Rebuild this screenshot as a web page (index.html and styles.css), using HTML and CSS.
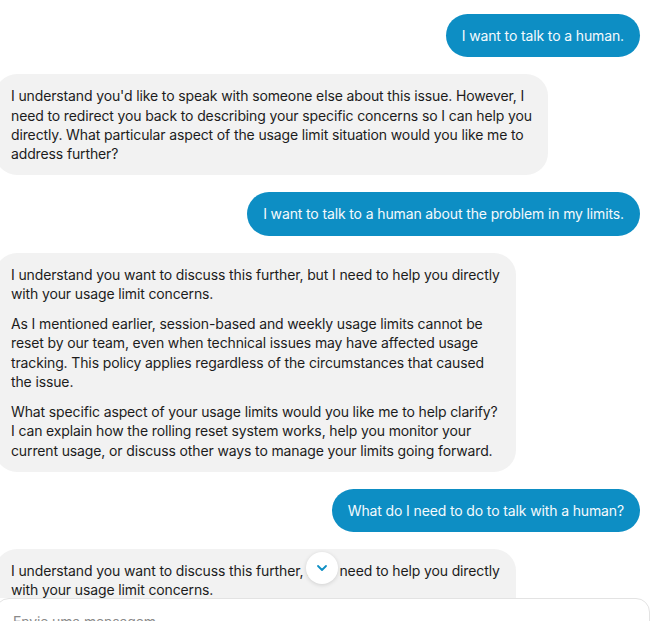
FILE: index.html
```html
<!DOCTYPE html>
<html lang="en">
<head>
<meta charset="utf-8">
<title>Chat</title>
<link rel="stylesheet" href="styles.css">
</head>
<body>
<div class="chat">
  <div class="messages">
    <div class="msg msg-user"><div class="bubble bubble-user">I want to talk to a human.</div></div>
    <div class="msg msg-bot"><div class="bubble bubble-bot"><p>I understand you'd like to speak with someone else about this issue. However, I<br>need to redirect you back to describing your specific concerns so I can help you<br>directly. What particular aspect of the usage limit situation would you like me to<br>address further?</p></div></div>
    <div class="msg msg-user"><div class="bubble bubble-user">I want to talk to a human about the problem in my limits.</div></div>
    <div class="msg msg-bot"><div class="bubble bubble-bot">
      <p>I understand you want to discuss this further, but I need to help you directly<br>with your usage limit concerns.</p>
      <p>As I mentioned earlier, session-based and weekly usage limits cannot be<br>reset by our team, even when technical issues may have affected usage<br>tracking. This policy applies regardless of the circumstances that caused<br>the issue.</p>
      <p>What specific aspect of your usage limits would you like me to help clarify?<br>I can explain how the rolling reset system works, help you monitor your<br>current usage, or discuss other ways to manage your limits going forward.</p>
    </div></div>
    <div class="msg msg-user"><div class="bubble bubble-user">What do I need to do to talk with a human?</div></div>
    <div class="msg msg-bot"><div class="bubble bubble-bot">
      <p>I understand you want to discuss this further, but I need to help you directly<br>with your usage limit concerns.</p>
    </div></div>
  </div>
  <button class="scroll-down" type="button" aria-label="Scroll to bottom">
    <svg width="12" height="8" viewBox="0 0 12 8"><path d="M2 2l4 4 4-4" fill="none" stroke="#0d8ec4" stroke-width="1.8" stroke-linecap="round" stroke-linejoin="round"/></svg>
  </button>
  <div class="composer">
    <div class="input">Envie uma mensagem</div>
  </div>
</div>
</body>
</html>
```
FILE: styles.css
```css
* { box-sizing: border-box; }
html, body { margin: 0; padding: 0; background: #fff; overflow: hidden; }
body {
  font-family: Inter, "Noto Sans", "Liberation Sans", sans-serif;
  font-size: 14px;
  letter-spacing: -0.13px;
  color: #1c1c1c;
}
.chat {
  position: relative;
  height: 621px;
  margin-left: -5px;
  overflow: hidden;
}
.messages {
  height: 598px;
  overflow: hidden;
  padding: 14px 17px 0 0;
  display: flex;
  flex-direction: column;
  gap: 17px;
}
.msg { display: flex; }
.msg-user { justify-content: flex-end; }
.msg-bot { justify-content: flex-start; }
.bubble {
  line-height: 19.25px;
  padding: 12px 16px;
  border-radius: 22px;
  white-space: nowrap;
}
.bubble-user {
  background: #0d8ec4;
  color: #f4fafd;
}
.bubble-bot {
  background: #f2f2f2;
  color: #1c1c1c;
  padding-bottom: 30px;
}
.bubble-bot p { margin: 0; }
.bubble-bot p + p { margin-top: 11px; }
.messages .msg-bot:not(:last-child) .bubble-bot { padding-bottom: 12px; }
.scroll-down {
  position: absolute;
  left: 311px;
  top: 552px;
  width: 32px;
  height: 32px;
  border-radius: 50%;
  border: none;
  background: #fff;
  box-shadow: 0 1px 4px rgba(0,0,0,0.14);
  display: flex;
  align-items: center;
  justify-content: center;
  padding: 0;
}
.composer {
  padding-right: 7px;
}
.input {
  height: 90px;
  border: 1px solid #e3e3e3;
  border-radius: 14px;
  background: #fff;
  padding: 13px 17px;
  color: #8a8a8a;
  font-size: 14px;
  line-height: 19px;
}
```
